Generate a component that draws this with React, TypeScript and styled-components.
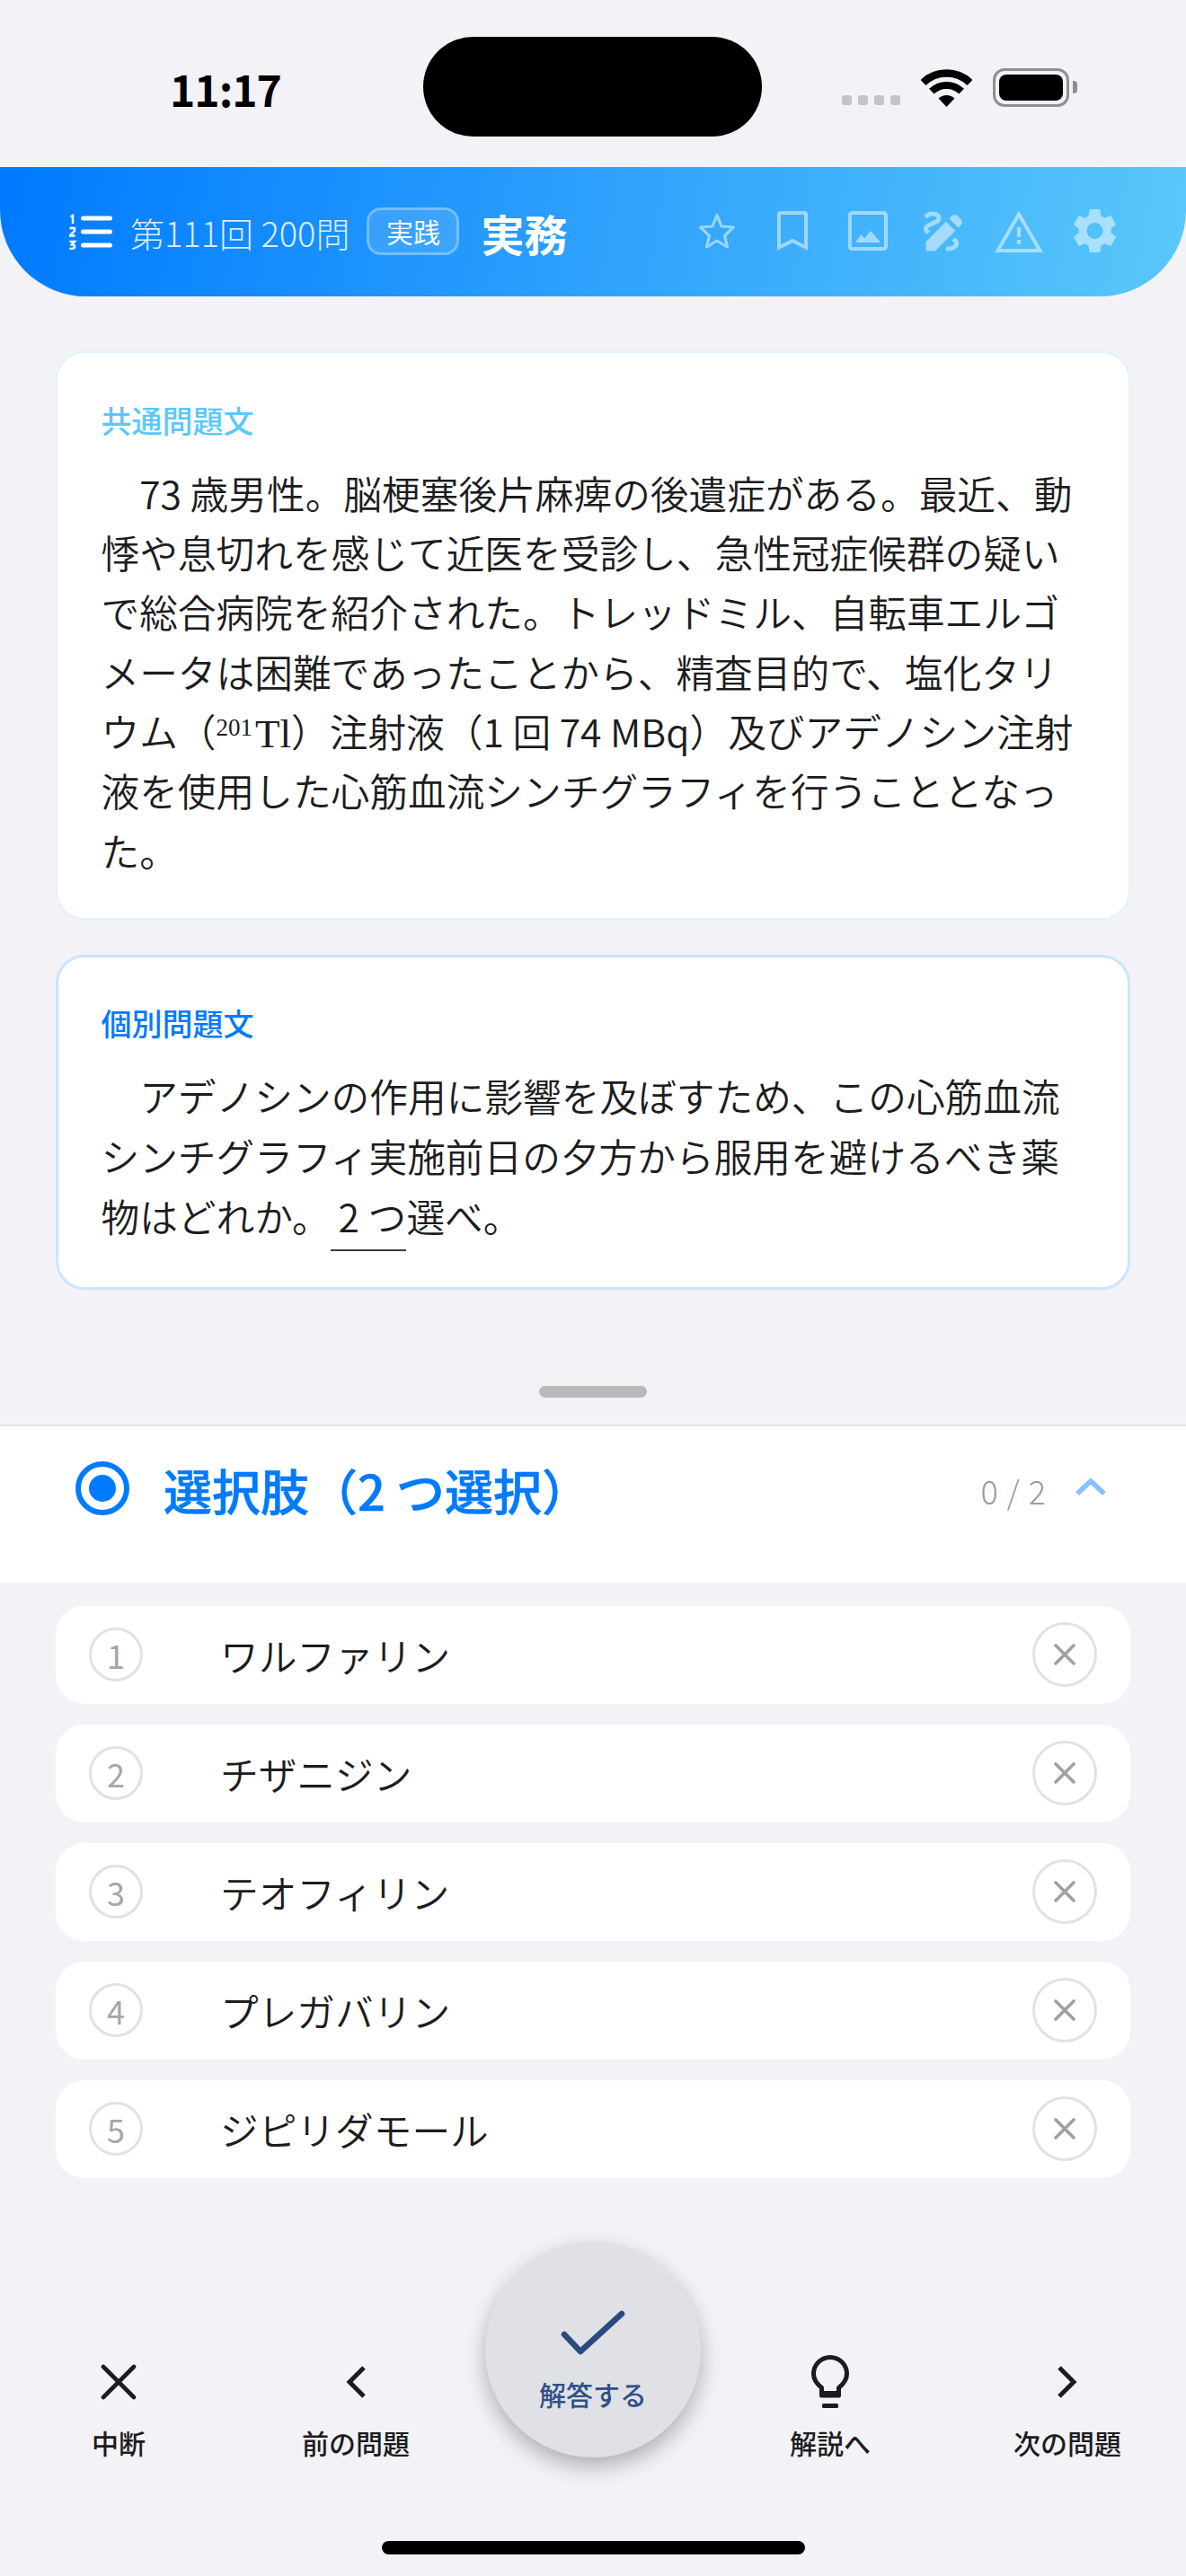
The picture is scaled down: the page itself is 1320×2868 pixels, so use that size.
import React from "react";
import styled, { createGlobalStyle } from "styled-components";

const Global = createGlobalStyle`
  html, body { margin: 0; padding: 0; background: #f2f2f7; }
  body { font-family: "Noto Sans CJK JP", "Noto Sans", sans-serif; color: #1c1c1e; }
  * { box-sizing: border-box; }
`;

const Page = styled.div`
  width: 1320px;
  height: 2868px;
  overflow: hidden;
  background: #f2f2f7;
  display: flex;
  flex-direction: column;
`;

const StatusBar = styled.div`
  height: 186px;
  flex: none;
  display: flex;
  align-items: flex-start;
`;
const TimeArea = styled.div`
  width: 471px;
  padding: 68px 0 0 189px;
  font-size: 48px;
  line-height: 60px;
  letter-spacing: -1px;
  font-weight: 700;
  color: #000;
`;
const Island = styled.div`
  width: 377px;
  height: 111px;
  margin-top: 41px;
  border-radius: 56px;
  background: #000;
`;
const StatusIcons = styled.div`
  display: flex;
  align-items: flex-end;
  height: 44px;
  margin: 75px 0 0 89px;
`;
const SignalDots = styled.div`
  display: flex;
  gap: 7px;
  margin-right: 23px;
  padding-bottom: 2px;
`;
const SignalDot = styled.span`
  width: 11px;
  height: 11px;
  border-radius: 3px;
  background: #c4c4c8;
`;
const Battery = styled.div`
  width: 85px;
  height: 43px;
  margin-left: 23px;
  border: 3px solid #8e8e93;
  border-radius: 13px;
  padding: 4px;
  position: relative;
  &::after {
    content: "";
    position: absolute;
    right: -12px;
    top: 11px;
    width: 5px;
    height: 14px;
    border-radius: 0 4px 4px 0;
    background: #8e8e93;
  }
`;
const BatteryFill = styled.div`
  height: 100%;
  border-radius: 8px;
  background: #000;
`;

const Header = styled.header`
  height: 144px;
  flex: none;
  display: flex;
  align-items: center;
  padding: 0 60px 0 77px;
  border-radius: 0 0 96px 96px;
  background: linear-gradient(100deg, #007aff 0%, #5ac8fa 100%);
  color: #fff;
`;
const ListIconBox = styled.div`
  display: flex;
  margin: 0 20px 0 0;
`;
const Round = styled.span`
  font-size: 38px;
  line-height: 48px;
  font-weight: 300;
  color: rgba(255, 255, 255, 0.85);
  white-space: nowrap;
  margin-top: 2px;
`;
const Badge = styled.span`
  width: 103px;
  height: 53px;
  margin: -2px 24px 0 19px;
  display: flex;
  align-items: center;
  justify-content: center;
  border: 3px solid rgba(255, 255, 255, 0.3);
  border-radius: 16px;
  background: rgba(255, 255, 255, 0.12);
  font-size: 30px;
  font-weight: 400;
  color: rgba(255, 255, 255, 0.95);
`;
const Title = styled.span`
  font-size: 48px;
  line-height: 60px;
  font-weight: 700;
  white-space: nowrap;
  margin-top: 1px;
`;
const HeaderActions = styled.div`
  display: flex;
  margin-left: auto;
  margin-top: -2px;
`;
const ActionSlot = styled.div`
  width: 84px;
  display: flex;
  justify-content: center;
  align-items: center;
  opacity: 0.5;
`;

const Content = styled.main`
  padding: 61px 62px 0;
  display: flex;
  flex-direction: column;
  gap: 39px;
`;
const Card = styled.section<{ $border: string; $width: number; $bottom: number }>`
  background: #fff;
  border: ${(p) => p.$width}px solid ${(p) => p.$border};
  border-radius: 32px;
  padding: ${(p) => 51.5 - p.$width}px ${(p) => 50.5 - p.$width}px ${(p) => p.$bottom}px;
`;
const CardLabel = styled.div<{ $color: string }>`
  font-size: 34px;
  line-height: 50px;
  font-weight: 500;
  color: ${(p) => p.$color};
`;
const Line = styled.span`
  display: block;
  &:first-child {
    text-indent: 1em;
  }
`;
const Passage = styled.div<{ $pitch: number }>`
  margin: 22px 0 0;
  font-size: 42.7px;
  line-height: ${(p) => p.$pitch}px;
  font-weight: 350;
  color: #1c1c1e;
  white-space: nowrap;
  ${Line} {
    height: ${(p) => p.$pitch}px;
  }
`;
const Sup = styled.span`
  font-family: "Liberation Serif", serif;
  font-size: 27px;
  vertical-align: 13px;
  line-height: 0;
`;
const Nuclide = styled.span`
  font-family: "Liberation Serif", serif;
  font-size: 45px;
  line-height: 0;
  margin-left: 3px;
`;
const Under = styled.span`
  padding: 0 0.3px 7px 8.3px;
  margin-left: 0.4px;
  border-bottom: 2px solid #3a3a3c;
`;

const HandleRow = styled.div`
  display: flex;
  justify-content: center;
  padding-top: 107px;
  height: 150px;
  flex: none;
`;
const Handle = styled.div`
  width: 120px;
  height: 13px;
  border-radius: 7px;
  background: #b9b9b9;
`;

const SectionHeader = styled.div`
  height: 176px;
  flex: none;
  background: #fff;
  border-top: 2px solid #e6e6eb;
  display: flex;
  align-items: flex-start;
  padding: 39px 90px 0 84px;
`;
const RadioMark = styled.div`
  width: 60px;
  height: 60px;
  border-radius: 50%;
  border: 6px solid #007aff;
  padding: 9px;
  flex: none;
  &::after {
    content: "";
    display: block;
    width: 30px;
    height: 30px;
    border-radius: 50%;
    background: #007aff;
  }
`;
const SectionTitle = styled.h2`
  margin: -11px 0 0 38px;
  font-size: 54px;
  line-height: 86px;
  font-weight: 500;
  -webkit-text-stroke: 0.6px #007aff;
  color: #007aff;
  white-space: nowrap;
`;
const Count = styled.span`
  margin: 7px 0 0 auto;
  font-size: 36px;
  line-height: 50px;
  font-weight: 300;
  color: #999;
  letter-spacing: 1px;
`;
const Chevron = styled.div`
  margin: 18px -1px 0 32px;
  display: flex;
`;

const Options = styled.ul`
  list-style: none;
  margin: 0;
  padding: 26px 62px 0;
  display: flex;
  flex-direction: column;
  gap: 23px;
`;
const Option = styled.li`
  height: 109px;
  border-radius: 32px;
  background: #fff;
  display: flex;
  align-items: center;
  padding: 0 37px;
`;
const OptionNo = styled.span`
  width: 60px;
  height: 60px;
  flex: none;
  border-radius: 50%;
  border: 3px solid #e2e2e2;
  display: flex;
  align-items: center;
  justify-content: center;
  font-size: 36px;
  color: #a6a6a6;
`;
const OptionText = styled.span`
  margin-left: 86px;
  font-size: 42.7px;
  font-weight: 350;
  color: #1c1c1e;
`;
const Eliminate = styled.span`
  margin-left: auto;
  width: 72px;
  height: 72px;
  border-radius: 50%;
  border: 3px solid #e2e2e2;
  display: flex;
  align-items: center;
  justify-content: center;
`;

const Footer = styled.nav`
  margin-top: 71px;
  height: 240px;
  flex: none;
  display: grid;
  grid-template-columns: repeat(5, 264px);
  align-items: end;
  justify-items: center;
`;
const ToolButton = styled.div`
  display: flex;
  flex-direction: column;
  align-items: center;
  margin-bottom: -5px;
`;
const ToolIcon = styled.div`
  height: 60px;
  display: flex;
  align-items: center;
  justify-content: center;
`;
const ToolLabel = styled.span`
  margin-top: 15px;
  font-size: 30px;
  line-height: 44px;
  font-weight: 500;
  color: #1c1c1e;
  white-space: nowrap;
`;
const AnswerButton = styled.div`
  width: 240px;
  height: 240px;
  border-radius: 50%;
  background: #e0e1e6;
  box-shadow: 0 10px 24px rgba(0, 0, 0, 0.28);
  display: flex;
  flex-direction: column;
  align-items: center;
  padding-top: 76px;
`;
const AnswerLabel = styled.span`
  margin-top: 21px;
  font-size: 30px;
  line-height: 44px;
  font-weight: 500;
  color: #2f5088;
  white-space: nowrap;
`;

const HomeRow = styled.div`
  display: flex;
  justify-content: center;
  padding-top: 93px;
`;
const HomeBar = styled.div`
  width: 471px;
  height: 15px;
  border-radius: 8px;
  background: #000;
`;

const Wifi = () => (
  <svg width="57" height="42" viewBox="0 0 57 42" fill="none">
    <path d="M2.5 15A37.5 37.5 0 0 1 54.5 15" stroke="#000" strokeWidth="8.5" />
    <path d="M11.8 24.7A24 24 0 0 1 45.2 24.7" stroke="#000" strokeWidth="8" />
    <path d="M28.5 42L19.5 32.6A13 13 0 0 1 37.5 32.6Z" fill="#000" />
  </svg>
);

const ListIcon = () => (
  <svg width="48" height="40" viewBox="0 0 48 40" fill="none" stroke="#fff">
    <path d="M15.5 5H45.5M15.5 20H45.5M15.5 35H45.5" strokeWidth="5" strokeLinecap="round" />
    <path d="M1.5 3.5L4 2V11" strokeWidth="2.4" />
    <path d="M.5 16H6V19L.5 24.5H6.5" strokeWidth="2.4" />
    <path d="M.5 31H6L3 34.2C5.5 34.2 6.2 35.5 6.2 36.8C6.2 38.2 5 39 .5 39" strokeWidth="2.4" />
  </svg>
);

const StarIcon = () => (
  <svg width="42" height="40" viewBox="0 0 42 40" fill="none" stroke="#fff" strokeWidth="3.2" strokeLinejoin="round">
    <path d="M21 2.5L26 15L39.5 16L29.5 25.5L32.5 38L21 31L9.5 38L12.5 25.5L2.5 16L16 15Z" />
  </svg>
);
const BookmarkIcon = () => (
  <svg width="34" height="44" viewBox="0 0 34 44" fill="none" stroke="#fff" strokeWidth="4">
    <path d="M2 40.5V4Q2 2 4 2H30Q32 2 32 4V40.5L17 33Z" />
  </svg>
);
const ImageIcon = () => (
  <svg width="44" height="44" viewBox="0 0 44 44" fill="none">
    <rect x="2" y="2" width="40" height="40" rx="2.5" stroke="#fff" strokeWidth="4" />
    <path d="M8 35L14.5 26L18 30.5L25 22L36 35Z" fill="#fff" />
  </svg>
);
const DrawIcon = () => (
  <svg width="44" height="45" viewBox="3 3 18 18" fill="#fff">
    <path d="M18.85 10.39l1.06-1.06c.78-.78.78-2.05 0-2.83L18.5 5.09c-.78-.78-2.05-.78-2.83 0l-1.06 1.06 4.24 4.24zm-5.66-2.83L4 16.76V21h4.24l9.19-9.19-4.24-4.25zM19 17.5c0 2.19-2.54 3.5-5 3.5-.55 0-1-.45-1-1s.45-1 1-1c1.54 0 3-.73 3-1.5 0-.47-.48-.87-1.23-1.2l1.48-1.48c1.07.63 1.75 1.47 1.75 2.68zM4.58 13.35C3.61 12.79 3 12.06 3 11c0-1.8 1.89-2.63 3.56-3.36C7.59 7.18 9 6.56 9 6c0-.41-.78-1-2-1-1.26 0-1.8.61-1.83.64-.35.41-.98.46-1.4.12-.41-.34-.49-.95-.15-1.38C3.73 4.24 4.76 3 7 3s4 1.32 4 3c0 1.87-1.93 2.72-3.64 3.47C6.42 9.88 5 10.5 5 11c0 .31.43.6 1.07.86l-1.49 1.49z" />
  </svg>
);
const WarningIcon = () => (
  <svg width="54" height="47" viewBox="0 0 54 47" fill="none">
    <path d="M27 4.5L3.5 45H50.5Z" stroke="#fff" strokeWidth="4" />
    <rect x="24.8" y="19" width="4.4" height="11" fill="#fff" />
    <rect x="24.8" y="33" width="4.4" height="5" fill="#fff" />
  </svg>
);
const GearIcon = () => (
  <svg width="49" height="50" viewBox="2.7 2 18.6 20" fill="#fff">
    <path d="M19.14 12.94c.04-.3.06-.61.06-.94 0-.32-.02-.64-.07-.94l2.03-1.58c.18-.14.23-.41.12-.61l-1.92-3.32c-.12-.22-.37-.29-.59-.22l-2.39.96c-.5-.38-1.03-.7-1.62-.94l-.36-2.54c-.04-.24-.24-.41-.48-.41h-3.84c-.24 0-.43.17-.47.41l-.36 2.54c-.59.24-1.13.57-1.62.94l-2.39-.96c-.22-.08-.47 0-.59.22L2.74 8.87c-.12.21-.08.47.12.61l2.03 1.58c-.05.3-.09.63-.09.94s.02.64.07.94l-2.03 1.58c-.18.14-.23.41-.12.61l1.92 3.32c.12.22.37.29.59.22l2.39-.96c.5.38 1.03.7 1.62.94l.36 2.54c.05.24.24.41.48.41h3.84c.24 0 .44-.17.47-.41l.36-2.54c.59-.24 1.13-.56 1.62-.94l2.39.96c.22.08.47 0 .59-.22l1.92-3.32c.12-.22.07-.47-.12-.61l-2.01-1.58zM12 15.6c-1.98 0-3.6-1.62-3.6-3.6s1.62-3.6 3.6-3.6 3.6 1.62 3.6 3.6-1.62 3.6-3.6 3.6z" />
  </svg>
);

const ChevronUp = () => (
  <svg width="34" height="20" viewBox="0 0 34 20" fill="none">
    <path d="M2 18L17 4L32 18" stroke="#85c0ff" strokeWidth="5.5" />
  </svg>
);
const SmallX = () => (
  <svg width="24" height="24" viewBox="0 0 24 24" fill="none">
    <path d="M2 2L22 22M22 2L2 22" stroke="#a0a0a0" strokeWidth="3.6" strokeLinecap="round" />
  </svg>
);
const CloseIcon = () => (
  <svg width="40" height="40" viewBox="0 0 40 40" fill="none">
    <path d="M3 3L37 37M37 3L3 37" stroke="#1c1c1e" strokeWidth="4.6" strokeLinecap="round" />
  </svg>
);
const PrevIcon = () => (
  <svg width="22" height="36" viewBox="0 0 22 36" fill="none">
    <path d="M20 2L4 18L20 34" stroke="#1c1c1e" strokeWidth="5" />
  </svg>
);
const NextIcon = () => (
  <svg width="22" height="36" viewBox="0 0 22 36" fill="none">
    <path d="M2 2L18 18L2 34" stroke="#1c1c1e" strokeWidth="5" />
  </svg>
);
const BulbIcon = () => (
  <svg width="42" height="59" viewBox="0 0 42 59" fill="none">
    <path d="M21 2.5C11 2.5 2.5 10.5 2.5 21C2.5 27.5 6 32 11.5 36.5V45H30.5V36.5C36 32 39.5 27.5 39.5 21C39.5 10.5 31 2.5 21 2.5Z" stroke="#1c1c1e" strokeWidth="5" strokeLinejoin="round" />
    <rect x="11" y="40" width="20" height="7" rx="2" fill="#1c1c1e" />
    <rect x="12" y="54" width="18" height="5" rx="1.5" fill="#1c1c1e" />
  </svg>
);
const CheckIcon = () => (
  <svg width="72" height="50" viewBox="0 0 72 50" fill="none">
    <path d="M4 27L22 46L68 4" stroke="#2a4a80" strokeWidth="6.5" strokeLinecap="round" strokeLinejoin="round" />
  </svg>
);

const options = ["ワルファリン", "チザニジン", "テオフィリン", "プレガバリン", "ジピリダモール"];
const actions = [StarIcon, BookmarkIcon, ImageIcon, DrawIcon, WarningIcon, GearIcon];

export default function App() {
  return (
    <Page>
      <Global />
      <StatusBar>
        <TimeArea>11:17</TimeArea>
        <Island />
        <StatusIcons>
          <SignalDots>
            {[0, 1, 2, 3].map((i) => (
              <SignalDot key={i} />
            ))}
          </SignalDots>
          <Wifi />
          <Battery>
            <BatteryFill />
          </Battery>
        </StatusIcons>
      </StatusBar>

      <Header>
        <ListIconBox>
          <ListIcon />
        </ListIconBox>
        <Round>第111回 200問</Round>
        <Badge>実践</Badge>
        <Title>実務</Title>
        <HeaderActions>
          {actions.map((Icon, i) => (
            <ActionSlot key={i}>
              <Icon />
            </ActionSlot>
          ))}
        </HeaderActions>
      </Header>

      <Content>
        <Card $border="#dff3fe" $width={2} $bottom={42.7}>
          <CardLabel $color="#5ac8fa">共通問題文</CardLabel>
          <Passage $pitch={66.4}>
            <Line>73 歳男性。脳梗塞後片麻痺の後遺症がある。最近、動</Line>
            <Line>悸や息切れを感じて近医を受診し、急性冠症候群の疑い</Line>
            <Line>で総合病院を紹介された。トレッドミル、自転車エルゴ</Line>
            <Line>メータは困難であったことから、精査目的で、塩化タリ</Line>
            <Line>
              ウム（<Sup>201</Sup>
              <Nuclide>Tl</Nuclide>）注射液（1 回 74 MBq）及びアデノシン注射
            </Line>
            <Line>液を使用した心筋血流シンチグラフィを行うこととなっ</Line>
            <Line>た。</Line>
          </Passage>
        </Card>
        <Card $border="#cce4ff" $width={3} $bottom={45.8}>
          <CardLabel $color="#007aff">個別問題文</CardLabel>
          <Passage $pitch={66.9}>
            <Line>アデノシンの作用に影響を及ぼすため、この心筋血流</Line>
            <Line>シンチグラフィ実施前日の夕方から服用を避けるべき薬</Line>
            <Line>
              物はどれか。<Under>2 つ</Under>選べ。
            </Line>
          </Passage>
        </Card>
      </Content>

      <HandleRow>
        <Handle />
      </HandleRow>

      <SectionHeader>
        <RadioMark />
        <SectionTitle>選択肢（2 つ選択）</SectionTitle>
        <Count>0 / 2</Count>
        <Chevron>
          <ChevronUp />
        </Chevron>
      </SectionHeader>

      <Options>
        {options.map((name, i) => (
          <Option key={name}>
            <OptionNo>{i + 1}</OptionNo>
            <OptionText>{name}</OptionText>
            <Eliminate>
              <SmallX />
            </Eliminate>
          </Option>
        ))}
      </Options>

      <Footer>
        <ToolButton>
          <ToolIcon>
            <CloseIcon />
          </ToolIcon>
          <ToolLabel>中断</ToolLabel>
        </ToolButton>
        <ToolButton>
          <ToolIcon>
            <PrevIcon />
          </ToolIcon>
          <ToolLabel>前の問題</ToolLabel>
        </ToolButton>
        <AnswerButton>
          <CheckIcon />
          <AnswerLabel>解答する</AnswerLabel>
        </AnswerButton>
        <ToolButton>
          <ToolIcon>
            <BulbIcon />
          </ToolIcon>
          <ToolLabel>解説へ</ToolLabel>
        </ToolButton>
        <ToolButton>
          <ToolIcon>
            <NextIcon />
          </ToolIcon>
          <ToolLabel>次の問題</ToolLabel>
        </ToolButton>
      </Footer>

      <HomeRow>
        <HomeBar />
      </HomeRow>
    </Page>
  );
}
